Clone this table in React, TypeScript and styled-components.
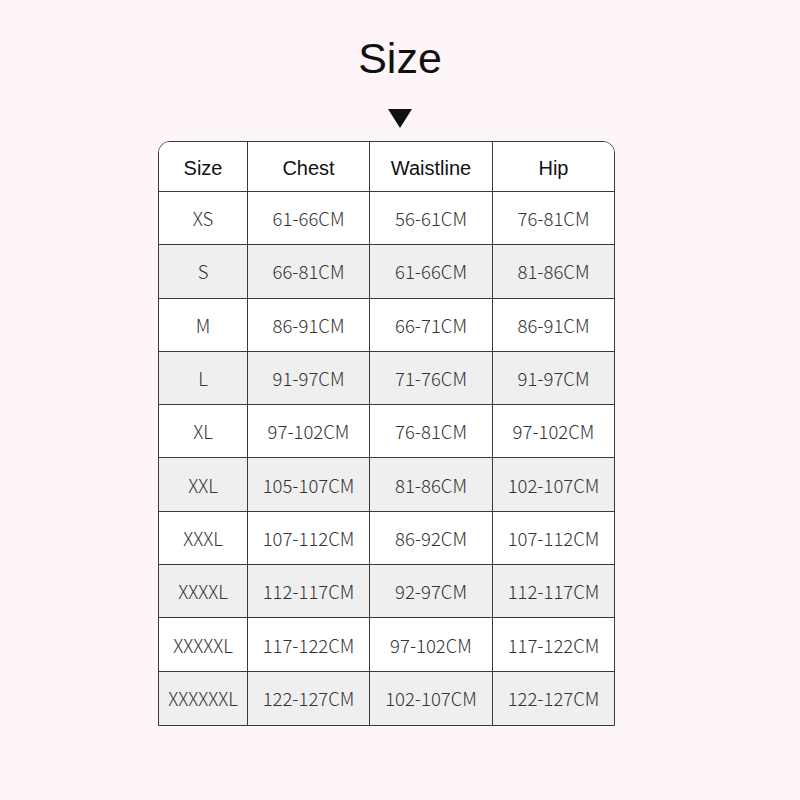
import React from 'react';
import styled, { createGlobalStyle } from 'styled-components';

const GlobalStyle = createGlobalStyle`
  html, body {
    margin: 0;
    padding: 0;
    background: #fdf5f7;
  }
`;

const Page = styled.main`
  width: 800px;
  height: 800px;
  display: flex;
  flex-direction: column;
  align-items: center;
  box-sizing: border-box;
  padding-top: 34px;
`;

const Title = styled.h1`
  margin: 0;
  font-family: 'Liberation Sans', Arial, sans-serif;
  font-weight: 400;
  font-size: 43px;
  line-height: 48px;
  color: #111;
`;

const Arrow = styled.svg`
  display: block;
  margin-top: 27px;
  margin-bottom: 13px;
`;

const Table = styled.div`
  display: grid;
  grid-template-columns: 89px 122px 123px 121px;
  width: 457px;
  margin-right: 27px;
  box-sizing: border-box;
  border: 1px solid #3a3a3a;
  border-radius: 12px 12px 0 0;
  overflow: hidden;
  background: #fff;
`;

const Cell = styled.div<{ $head?: boolean; $shade?: boolean; $last?: boolean }>`
  height: ${(p) => (p.$head ? '50px' : '53.3px')};
  padding-top: ${(p) => (p.$head ? '3px' : '0')};
  display: flex;
  align-items: center;
  justify-content: center;
  box-sizing: border-box;
  border-right: ${(p) => (p.$last ? 'none' : '1px solid #3a3a3a')};
  border-bottom: 1px solid #3a3a3a;
  background: ${(p) => (p.$shade ? '#efefef' : '#fff')};
  font-family: ${(p) =>
    p.$head
      ? "'Liberation Sans', Arial, sans-serif"
      : "'Noto Sans CJK SC', 'Noto Sans', sans-serif"};
  font-weight: ${(p) => (p.$head ? 400 : 300)};
  font-size: ${(p) => (p.$head ? '20px' : '18.5px')};
  color: ${(p) => (p.$head ? '#111' : '#333')};
  white-space: nowrap;
`;

const Row = styled.div`
  display: contents;
  &:last-child > div {
    border-bottom: none;
  }
`;

const headers = ['Size', 'Chest', 'Waistline', 'Hip'];

const rows: string[][] = [
  ['XS', '61-66CM', '56-61CM', '76-81CM'],
  ['S', '66-81CM', '61-66CM', '81-86CM'],
  ['M', '86-91CM', '66-71CM', '86-91CM'],
  ['L', '91-97CM', '71-76CM', '91-97CM'],
  ['XL', '97-102CM', '76-81CM', '97-102CM'],
  ['XXL', '105-107CM', '81-86CM', '102-107CM'],
  ['XXXL', '107-112CM', '86-92CM', '107-112CM'],
  ['XXXXL', '112-117CM', '92-97CM', '112-117CM'],
  ['XXXXXL', '117-122CM', '97-102CM', '117-122CM'],
  ['XXXXXXL', '122-127CM', '102-107CM', '122-127CM'],
];

const App = () => (
  <>
    <GlobalStyle />
    <Page>
      <Title>Size</Title>
      <Arrow width="24" height="19" viewBox="0 0 24 19">
        <polygon points="0,0 24,0 12,19" fill="#111" />
      </Arrow>
      <Table>
        <Row>
          {headers.map((h, i) => (
            <Cell key={h} $head $last={i === headers.length - 1}>
              {h}
            </Cell>
          ))}
        </Row>
        {rows.map((r, ri) => (
          <Row key={r[0]}>
            {r.map((v, ci) => (
              <Cell key={ci} $shade={ri % 2 === 1} $last={ci === r.length - 1}>
                {v}
              </Cell>
            ))}
          </Row>
        ))}
      </Table>
    </Page>
  </>
);

export default App;
